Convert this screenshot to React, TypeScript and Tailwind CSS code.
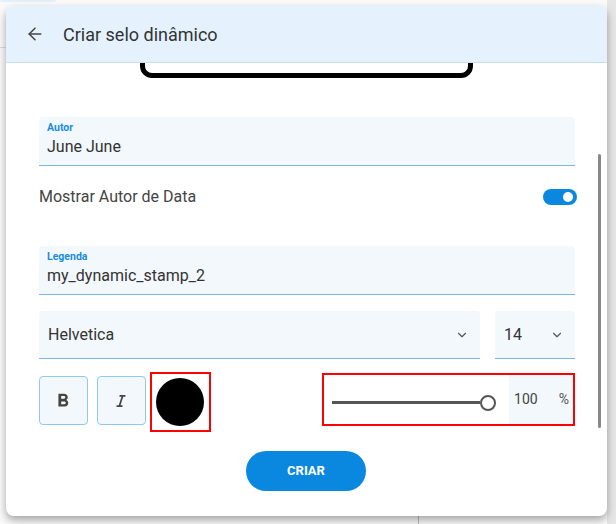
import { ArrowLeft, ChevronDown } from 'lucide-react';

const font = { fontFamily: 'Roboto, "Noto Sans", sans-serif' };

function Field({ label, value }: { label: string; value: string }) {
  return (
    <div className="flex h-[49px] flex-col rounded-t-[4px] border-b border-[#7ab8e8] bg-[#f3f8fc] px-2 pt-[4px]">
      <span className="text-[10.5px] font-bold leading-[14px] text-[#1a8ce0]">{label}</span>
      <span className="mt-[1px] text-[16px] leading-[21px] text-[#333]">{value}</span>
    </div>
  );
}

function SelectBox({ value, className }: { value: string; className: string }) {
  return (
    <div
      className={`flex h-[48px] items-center justify-between rounded-t-[4px] border-b border-[#7ab8e8] bg-[#f3f8fc] pl-[9px] pr-[11px] ${className}`}
    >
      <span className="text-[16px] text-[#333]">{value}</span>
      <ChevronDown size={14} strokeWidth={2} className="text-[#555]" />
    </div>
  );
}

function FormatButton({ children }: { children: React.ReactNode }) {
  return (
    <button
      type="button"
      className="mt-[4px] flex h-[49px] w-[49px] items-center justify-center rounded-[4px] border border-[#90c8f0] bg-[#f3f8fc] text-[#444]"
    >
      {children}
    </button>
  );
}

export default function App() {
  return (
    <div className="relative h-[524px] w-[616px] overflow-hidden bg-[#fafafa]" style={font}>
      {/* page behind the dialog */}
      <div className="h-[2px] w-[56px] rounded-b-full bg-[#e3effa]" />
      <div className="mt-[45px] h-px w-full bg-[#dcdcdc]" />
      <div className="absolute bottom-0 left-[418px] h-[10px] w-px bg-[#bbb]" />
      <div className="absolute right-0 top-0 h-full w-[9px] bg-[#e6e6e6]" />

      {/* dialog */}
      <div className="absolute left-[6px] top-[6px] flex h-[510px] w-[601px] flex-col overflow-hidden rounded-[8px] bg-white shadow-[0_4px_8px_rgba(0,0,0,0.35)]">
        <header className="flex h-[57px] shrink-0 items-center gap-[18px] border-b border-[#c9def0] bg-[#e5f2fd] pl-[19px]">
          <ArrowLeft size={20} strokeWidth={1.8} className="text-[#444]" />
          <h1 className="text-[18px] text-[#333]">Criar selo dinâmico</h1>
        </header>

        <div className="relative flex-1 overflow-hidden">
          <div className="absolute right-[6px] top-[91px] h-[274px] w-[3px] rounded-full bg-[#888]" />

          <div className="mx-auto -mt-[85px] h-[100px] w-[333px] rounded-[12px] border-[5px] border-black" />

          <div className="pl-[33px] pr-[32px]">
            <div className="mt-[39px]">
              <Field label="Autor" value="June June" />
            </div>

            <div className="mt-[20px] flex h-[22px] items-center justify-between">
              <span className="text-[16px] text-[#444]">Mostrar Autor de Data</span>
              <div className="mr-[-2px] flex h-[16px] w-[34px] items-center justify-end rounded-full bg-[#0a88e0] pr-[4px]">
                <div className="h-[10px] w-[10px] rounded-full bg-white" />
              </div>
            </div>

            <div className="mt-[38px]">
              <Field label="Legenda" value="my_dynamic_stamp_2" />
            </div>

            <div className="mt-[16px] flex gap-[15px]">
              <SelectBox value="Helvetica" className="w-[441px]" />
              <SelectBox value="14" className="w-[80px]" />
            </div>

            <div className="mt-[13px] flex h-[60px] items-start">
              <FormatButton>
                <svg width="22" height="22" viewBox="0 0 24 24" fill="currentColor">
                  <path d="M15.6 10.79c.97-.67 1.65-1.77 1.65-2.79 0-2.26-1.75-4-4-4H7v14h7.04c2.09 0 3.71-1.7 3.71-3.79 0-1.52-.86-2.82-2.15-3.42zM10 6.5h3c.83 0 1.5.67 1.5 1.5s-.67 1.5-1.5 1.5h-3v-3zm3.5 9H10v-3h3.5c.83 0 1.5.67 1.5 1.5s-.67 1.5-1.5 1.5z" />
                </svg>
              </FormatButton>
              <div className="ml-[9px]">
                <FormatButton>
                  <svg width="18" height="18" viewBox="0 0 24 24" fill="currentColor">
                    <path d="M10 4v2.4h2.6l-3.6 11.2H6V20h8v-2.4h-2.6l3.6-11.2H18V4z" />
                  </svg>
                </FormatButton>
              </div>
              <div className="ml-[4px] flex h-[60px] w-[61px] items-center justify-center border-2 border-[#f00]">
                <div className="h-[48px] w-[48px] rounded-full bg-black" />
              </div>

              <div className="ml-[111px] mt-[1px] flex h-[53px] w-[254px] items-stretch border-2 border-[#f00]">
                <div className="flex flex-1 items-center pl-[8px] pr-[13px] pt-[6px]">
                  <div className="h-[3px] flex-1 bg-[#555]" />
                  <div className="h-[16px] w-[16px] shrink-0 rounded-full border-2 border-[#555] bg-white" />
                </div>
                <div className="flex w-[64px] items-start justify-between bg-[#f3f8fc] pl-[5px] pr-[4px] pt-[16px]">
                  <span className="text-[14px] leading-[16px] text-[#444]">100</span>
                  <span className="text-[14px] leading-[16px] text-[#555]">%</span>
                </div>
              </div>
            </div>

            <div className="mt-[19px] flex justify-center pr-[2px]">
              <button
                type="button"
                className="h-[40px] w-[120px] rounded-full bg-[#0a88e0] text-[13px] font-bold text-white"
              >
                CRIAR
              </button>
            </div>
          </div>
        </div>
      </div>
    </div>
  );
}
